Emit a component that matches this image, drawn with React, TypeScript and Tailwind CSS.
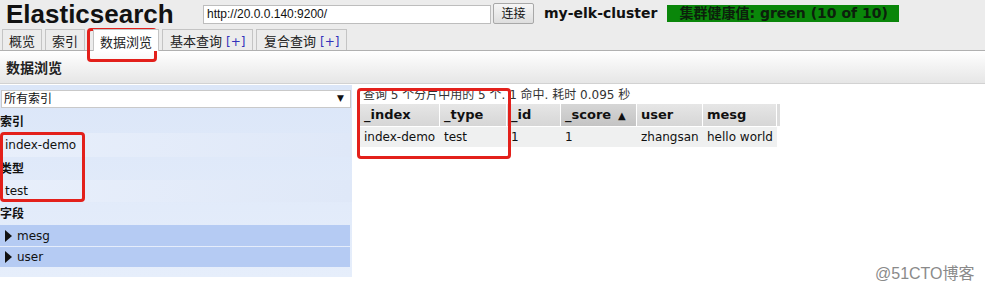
import React from "react";

const cjk = "font-['DejaVu_Sans','Noto_Sans_CJK_SC',sans-serif]";

function Tab({ label, plus, active }: { label: string; plus?: boolean; active?: boolean }) {
  return (
    <div
      className={
        "flex items-center pt-[4px] border border-b-0 border-[#c4c4c4] text-[13px] text-[#222] " +
        (plus ? "pl-[7px] w-[91px] " : "px-[6px] ") +
        (active ? "bg-white h-[22px] -mb-[1px] relative z-10" : "bg-[#ececec] h-[21px]")
      }
    >
      <span>{label}</span>
      {plus && <span className="ml-[4px] text-[12px] text-[#3333bb]">[+]</span>}
    </div>
  );
}

const cols = [
  { k: "_index", w: 80, v: "index-demo" },
  { k: "_type", w: 67, v: "test" },
  { k: "_id", w: 54, v: "1" },
  { k: "_score", w: 76, v: "1", sorted: true },
  { k: "user", w: 66, v: "zhangsan" },
  { k: "mesg", w: 74, v: "hello world" },
];

export default function App() {
  return (
    <div className={"w-[985px] h-[290px] bg-white relative overflow-hidden text-[#111] " + cjk}>
      {/* header */}
      <div className="h-[30px] bg-[#ececec] flex items-center">
        <div className="ml-[6px] w-[197px] font-['Liberation_Sans',sans-serif] font-bold text-[26px] leading-none text-[#111] -mt-[3px]">
          Elasticsearch
        </div>
        <div className="w-[288px] h-[19px] bg-white border border-[#bdbdbd] text-[12px] flex items-center pl-[3px] font-['Liberation_Sans',sans-serif] -mt-[2px]">
          http://20.0.0.140:9200/
        </div>
        <div className="ml-[2px] w-[41px] h-[21px] border border-[#a8a8a8] rounded-[2px] bg-gradient-to-b from-[#f6f6f6] to-[#dedede] text-[12px] flex items-center justify-center -mt-[3px]">
          连接
        </div>
        <div className="ml-[10px] font-bold text-[14px] text-[#111] -mt-[3px]">my-elk-cluster</div>
        <div className="ml-[10px] w-[232px] h-[17px] bg-[#0a860a] flex items-center pl-[12px] font-bold text-[14px] text-[#0c200c] -mt-[3px]">
          集群健康值: green (10 of 10)
        </div>
      </div>
      {/* tabs */}
      <div className="h-[21px] bg-[#ececec] flex items-end gap-[3px] pl-[2px] border-b border-[#b0b0b0] relative">
        <Tab label="概览" />
        <Tab label="索引" />
        <div className="w-[2px]" />
        <Tab label="数据浏览" active />
        <Tab label="基本查询" plus />
        <Tab label="复合查询" plus />
      </div>
      {/* sub header */}
      <div className="h-[33px] bg-gradient-to-b from-white to-[#e6e6e6] border-b border-[#d2d2d2] flex items-center pl-[6px] pt-[2px] font-bold text-[14px] text-[#222]">
        数据浏览
      </div>
      {/* body */}
      <div className="flex mt-[1px]">
        <div className="w-[352px] bg-gradient-to-b from-[#dbe6f8] to-[#e6eefb] pt-[5px] pb-[10px] text-[12px]">
          <div className="mx-[1px] h-[18px] bg-white border border-[#c9c9c9] flex items-center justify-between pl-[2px] pr-[6px]">
            <span>所有索引</span>
            <span className="text-[9px]">▼</span>
          </div>
          <div className="h-[25px] pt-[2px] flex items-center font-bold">索引</div>
          <div className="h-[24px] flex items-center pl-[5px] bg-gradient-to-r from-[#e8effb] to-[#dfe8f8]">index-demo</div>
          <div className="h-[23px] flex items-center font-bold">类型</div>
          <div className="h-[22px] flex items-center pl-[5px] bg-gradient-to-r from-[#e8effb] to-[#dfe8f8]">test</div>
          <div className="h-[23px] flex items-center font-bold">字段</div>
          <div className="mr-[2px] h-[21px] bg-[#b5cbf3] flex items-center pl-[4px]">
            <svg width="8" height="12" viewBox="0 0 8 12" className="mr-[5px]">
              <path d="M1 0 L8 6 L1 12 Z" fill="#111" />
            </svg>
            mesg
          </div>
          <div className="mr-[2px] mt-[1px] h-[20px] bg-[#b5cbf3] flex items-center pl-[4px]">
            <svg width="8" height="12" viewBox="0 0 8 12" className="mr-[5px]">
              <path d="M1 0 L8 6 L1 12 Z" fill="#111" />
            </svg>
            user
          </div>
        </div>
        <div className="flex-1 pl-[8px] text-[12px]">
          <div className="h-[19px] flex items-center pl-[3px] text-[#333]">
            查询 5 个分片中用的 5 个. 1 命中. 耗时 0.095 秒
          </div>
          <div className="flex h-[22px]">
            {cols.map((c) => (
              <div
                key={c.k}
                style={{ width: c.w }}
                className={
                  "h-full flex items-center pl-[4px] font-bold text-[13px] border-r border-white " +
                  (c.sorted
                    ? "bg-gradient-to-b from-[#d6d6d6] to-[#c4c4c4]"
                    : "bg-gradient-to-b from-[#e6e6e6] to-[#d6d6d6]")
                }
              >
                {c.k}
                {c.sorted && <span className="ml-[7px] text-[10px]">▲</span>}
              </div>
            ))}
            <div className="w-[3px] h-full bg-[#dcdcdc]" />
          </div>
          <div className="flex h-[20px] mt-[1px] w-[417px] bg-[#eff0f0]">
            {cols.map((c) => (
              <div key={c.k} style={{ width: c.w }} className="h-full flex items-center pl-[4px]">
                {c.v}
              </div>
            ))}
          </div>
        </div>
      </div>
      {/* red annotations */}
      <div className="absolute left-[87px] top-[28px] w-[70px] h-[34px] border-[3px] border-[#e3201b] rounded-[4px]" />
      <div className="absolute left-[0px] top-[132px] w-[85px] h-[70px] border-[3px] border-[#e3201b] rounded-[4px]" />
      <div className="absolute left-[357px] top-[88px] w-[154px] h-[71px] border-[3px] border-[#e3201b] rounded-[4px]" />
      {/* watermark */}
      <div className="absolute left-[875px] top-[262px] text-[16px] text-[#8a8a8a] font-['Liberation_Sans','Noto_Sans_CJK_SC',sans-serif]">
        @51CTO博客
      </div>
    </div>
  );
}
